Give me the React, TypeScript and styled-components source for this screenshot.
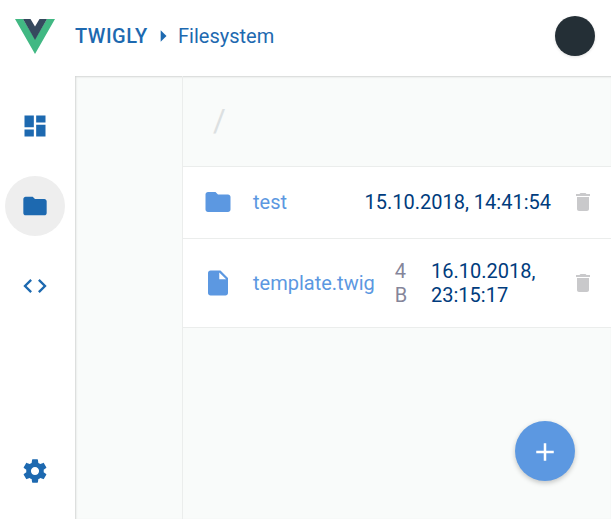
import React from 'react';
import styled, { createGlobalStyle } from 'styled-components';

const GlobalStyle = createGlobalStyle`
  * { box-sizing: border-box; }
  body {
    margin: 0;
    overflow: hidden;
    background: #fff;
    font-family: Roboto, "Liberation Sans", sans-serif;
    font-size: 20px;
    line-height: 24px;
    color: #1d69b0;
  }
`;

const paths = {
  dashboard: 'M3 13h8V3H3v10zm0 8h8v-6H3v6zm10 0h8V11h-8v10zm0-18v6h8V3h-8z',
  folder: 'M10 4H4c-1.1 0-1.99.9-1.99 2L2 18c0 1.1.9 2 2 2h16c1.1 0 2-.9 2-2V8c0-1.1-.9-2-2-2h-8l-2-2z',
  code: 'M9.4 16.6L4.8 12l4.6-4.6L8 6l-6 6 6 6 1.4-1.4zm5.2 0l4.6-4.6-4.6-4.6L16 6l6 6-6 6-1.4-1.4z',
  settings:
    'M19.43 12.98c.04-.32.07-.64.07-.98s-.03-.66-.07-.98l2.11-1.65c.19-.15.24-.42.12-.64l-2-3.46c-.12-.22-.39-.3-.61-.22l-2.49 1c-.52-.4-1.08-.73-1.69-.98l-.38-2.65C14.46 2.18 14.25 2 14 2h-4c-.25 0-.46.18-.49.42l-.38 2.65c-.61.25-1.17.59-1.69.98l-2.49-1c-.23-.09-.49 0-.61.22l-2 3.46c-.13.22-.07.49.12.64l2.11 1.65c-.04.32-.07.65-.07.98s.03.66.07.98l-2.11 1.65c-.19.15-.24.42-.12.64l2 3.46c.12.22.39.3.61.22l2.49-1c.52.4 1.08.73 1.69.98l.38 2.65c.03.24.24.42.49.42h4c.25 0 .46-.18.49-.42l.38-2.65c.61-.25 1.17-.59 1.69-.98l2.49 1c.23.09.49 0 .61-.22l2-3.46c.12-.22.07-.49-.12-.64l-2.11-1.65zM12 15.5c-1.93 0-3.5-1.57-3.5-3.5s1.57-3.5 3.5-3.5 3.5 1.57 3.5 3.5-1.57 3.5-3.5 3.5z',
  file: 'M6 2c-1.1 0-1.99.9-1.99 2L4 20c0 1.1.89 2 1.99 2H18c1.1 0 2-.9 2-2V8l-6-6H6zm7 7V3.5L18.5 9H13z',
  trash: 'M6 19c0 1.1.9 2 2 2h8c1.1 0 2-.9 2-2V7H6v12zM19 4h-3.5l-1-1h-5l-1 1H5v2h14V4z',
  arrow: 'M10 17l5-5-5-5v10z',
  plus: 'M19 13h-6v6h-2v-6H5v-2h6V5h2v6h6v2z',
};

const Svg = styled.svg`
  display: block;
  flex: none;
  fill: currentColor;
`;

const Icon = ({ name, size = 28 }: { name: keyof typeof paths; size?: number }) => (
  <Svg width={size} height={size} viewBox="0 0 24 24" aria-hidden="true">
    <path d={paths[name]} />
  </Svg>
);

const Page = styled.div`
  display: grid;
  grid-template: 76px 1fr / 75px 1fr;
  height: 100vh;
`;

const Header = styled.header`
  grid-column: 1 / -1;
  display: flex;
  align-items: center;
  padding: 0 16px 4px 15px;
`;

const Logo = styled.svg`
  display: block;
  width: 40px;
  height: 35px;
  margin-right: 20px;
`;

const Brand = styled.span`
  width: 74px;
  font-weight: 500;
  letter-spacing: 0.5px;
`;

const Crumb = styled.span`
  margin-left: 1px;
`;

const Avatar = styled.div`
  width: 40px;
  height: 40px;
  margin-left: auto;
  border-radius: 50%;
  background: #242f36;
  box-shadow: 0 1px 3px rgba(0, 0, 0, 0.12);
`;

const Rail = styled.nav`
  display: flex;
  flex-direction: column;
  gap: 20px;
  padding: 20px 5px 18px;
`;

const RailButton = styled.button<{ $active?: boolean; $last?: boolean }>`
  display: grid;
  place-items: center;
  flex: none;
  width: 60px;
  height: 60px;
  padding: 0;
  border: 0;
  border-radius: 50%;
  color: inherit;
  background: ${(p) => (p.$active ? '#eee' : 'transparent')};
  margin-top: ${(p) => (p.$last ? 'auto' : '0')};
`;

const Main = styled.main`
  display: grid;
  grid-template-columns: 107px 1fr;
  background: #f9fbfa;
  box-shadow: inset 1px 1px 2px rgba(0, 0, 0, 0.15);
`;

const Files = styled.section`
  grid-column: 2;
  border-left: 1px solid #ebedec;
`;

const PathBar = styled.div`
  display: flex;
  align-items: center;
  height: 91px;
  padding: 0 0 1px 30px;
  border-bottom: 1px solid #ebedec;
  font-size: 31px;
  color: #dce0e1;
`;

const Row = styled.div<{ $tall?: boolean }>`
  display: flex;
  align-items: center;
  height: ${(p) => (p.$tall ? 89 : 72)}px;
  padding: 0 16px ${(p) => (p.$tall ? 0 : 1)}px 20px;
  border-bottom: 1px solid #ebedec;
  background: #fff;
  color: #5c98e1;
`;

const Name = styled.span`
  margin-left: 20px;
`;

const Size = styled.span`
  width: 12px;
  margin-left: 20px;
  color: #85859a;
`;

const Modified = styled.time<{ $wrap?: boolean }>`
  width: ${(p) => (p.$wrap ? '120px' : 'auto')};
  margin-left: auto;
  color: #003c7d;
`;

const Delete = styled.button`
  margin-left: 20px;
  padding: 0;
  border: 0;
  background: none;
  color: #c9c9cb;
`;

const AddButton = styled.button`
  position: fixed;
  right: 36px;
  bottom: 38px;
  display: grid;
  place-items: center;
  width: 60px;
  height: 60px;
  padding: 2px 0 0;
  border: 0;
  border-radius: 50%;
  background: #5c98e1;
  color: #fff;
  box-shadow: 0 2px 5px rgba(0, 0, 0, 0.22);
`;

export default function App() {
  return (
    <>
      <GlobalStyle />
      <Page>
        <Header>
          <Logo viewBox="0 0 40 35">
            <path fill="#41b883" d="M0 0h8l12 20L32 0h8L20 35z" />
            <path fill="#35495e" d="M8 0h7.5L20 7.5 24.5 0H32L20 21z" />
          </Logo>
          <Brand>TWIGLY</Brand>
          <Icon name="arrow" />
          <Crumb>Filesystem</Crumb>
          <Avatar />
        </Header>
        <Rail>
          <RailButton><Icon name="dashboard" /></RailButton>
          <RailButton $active><Icon name="folder" /></RailButton>
          <RailButton><Icon name="code" /></RailButton>
          <RailButton $last><Icon name="settings" /></RailButton>
        </Rail>
        <Main>
          <Files>
            <PathBar>/</PathBar>
            <Row>
              <Icon name="folder" size={30} />
              <Name>test</Name>
              <Modified>15.10.2018, 14:41:54</Modified>
              <Delete><Icon name="trash" size={24} /></Delete>
            </Row>
            <Row $tall>
              <Icon name="file" size={30} />
              <Name>template.twig</Name>
              <Size>4 B</Size>
              <Modified $wrap>16.10.2018, 23:15:17</Modified>
              <Delete><Icon name="trash" size={24} /></Delete>
            </Row>
          </Files>
        </Main>
      </Page>
      <AddButton><Icon name="plus" size={30} /></AddButton>
    </>
  );
}
